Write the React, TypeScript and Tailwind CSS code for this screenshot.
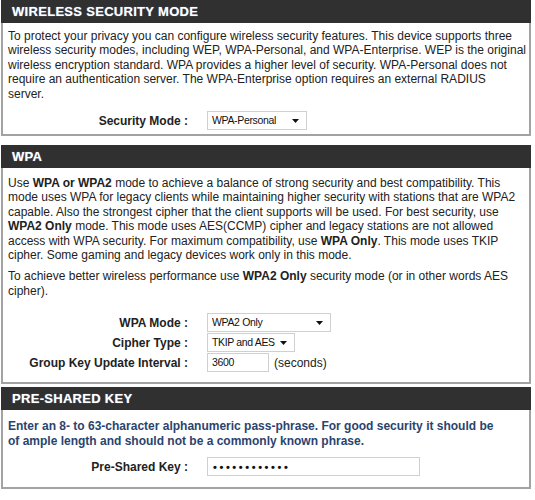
import React from 'react';

const font = { fontFamily: '"Liberation Sans", Arial, sans-serif' };

const Header = ({ title }: { title: string }) => (
  <div className="h-[23px] bg-[#303030] flex items-center pl-[11px]">
    <span className="text-white text-[13px] font-bold tracking-[0.3px] [text-shadow:0_0_1px_#8aa0c8]">
      {title}
    </span>
  </div>
);

const Caret = () => (
  <svg width="7" height="4" viewBox="0 0 7 4" className="shrink-0">
    <path d="M0 0h7L3.5 4z" fill="#111" />
  </svg>
);

const Select = ({ value, width }: { value: string; width: string }) => (
  <div className={`${width} h-[19px] border border-[#d0d0d0] bg-white flex items-center justify-between pl-[4px] pr-[7px]`}>
    <span className="text-[10.5px] tracking-[-0.35px] text-[#111] whitespace-nowrap">{value}</span>
    <Caret />
  </div>
);

const Row = ({ label, children }: { label: string; children: React.ReactNode }) => (
  <div className="flex items-center">
    <div className="w-[186px] text-right text-[12px] font-bold text-[#222] whitespace-nowrap">{label}</div>
    <div className="pl-[19px] flex items-center">{children}</div>
  </div>
);

export default function App() {
  return (
    <div className="w-[535px] h-[500px] bg-white pl-[1px] text-[#222]" style={font}>
      {/* wireless security mode */}
      <section className="w-[530px]">
        <Header title="WIRELESS SECURITY MODE" />
        <div className="border-2 border-t-0 border-[#a3a3a3] px-[5px] pt-[6px] pb-[4px]">
          <p className="text-[12px] leading-[14.4px] whitespace-nowrap">
            To protect your privacy you can configure wireless security features. This device supports three<br />
            wireless security modes, including WEP, WPA-Personal, and WPA-Enterprise. WEP is the original<br />
            wireless encryption standard. WPA provides a higher level of security. WPA-Personal does not<br />
            require an authentication server. The WPA-Enterprise option requires an external RADIUS<br />
            server.
          </p>
          <div className="mt-[10px] -ml-[6px]">
            <Row label="Security Mode :">
              <Select value="WPA-Personal" width="w-[100px]" />
            </Row>
          </div>
        </div>
      </section>

      {/* wpa */}
      <section className="w-[530px] mt-[9px]">
        <Header title="WPA" />
        <div className="border-2 border-t-0 border-[#a3a3a3] px-[5px] pt-[8px] pb-[10px]">
          <p className="text-[12px] leading-[14.4px] whitespace-nowrap">
            Use <b>WPA or WPA2</b> mode to achieve a balance of strong security and best compatibility. This<br />
            mode uses WPA for legacy clients while maintaining higher security with stations that are WPA2<br />
            capable. Also the strongest cipher that the client supports will be used. For best security, use<br />
            <b>WPA2 Only</b> mode. This mode uses AES(CCMP) cipher and legacy stations are not allowed<br />
            access with WPA security. For maximum compatibility, use <b>WPA Only</b>. This mode uses TKIP<br />
            cipher. Some gaming and legacy devices work only in this mode.
          </p>
          <p className="text-[12px] leading-[14.4px] whitespace-nowrap mt-[7px]">
            To achieve better wireless performance use <b>WPA2 Only</b> security mode (or in other words AES<br />
            cipher).
          </p>
          <div className="mt-[15px] -ml-[6px] flex flex-col gap-[1px]">
            <Row label="WPA Mode :">
              <Select value="WPA2 Only" width="w-[124px]" />
            </Row>
            <Row label="Cipher Type :">
              <Select value="TKIP and AES" width="w-[88px]" />
            </Row>
            <Row label="Group Key Update Interval :">
              <div className="w-[62px] h-[19px] border border-[#d0d0d0] bg-white flex items-center pl-[4px]">
                <span className="text-[10.5px] tracking-[-0.35px] text-[#111]">3600</span>
              </div>
              <span className="text-[12px] ml-[5px]">(seconds)</span>
            </Row>
          </div>
        </div>
      </section>

      {/* pre-shared key */}
      <section className="w-[530px] mt-[3px]">
        <Header title="PRE-SHARED KEY" />
        <div className="border-2 border-t-0 border-[#a3a3a3] px-[5px] pt-[9px] pb-[11px]">
          <p className="text-[12px] leading-[14.6px] font-bold text-[#2a446e] whitespace-nowrap">
            Enter an 8- to 63-character alphanumeric pass-phrase. For good security it should be<br />
            of ample length and should not be a commonly known phrase.
          </p>
          <div className="mt-[9px] -ml-[6px]">
            <Row label="Pre-Shared Key :">
              <div className="w-[213px] h-[19px] border border-[#d0d0d0] bg-white flex items-center pl-[5px]">
                <span className="text-[11px] font-bold tracking-[2.6px] text-[#111]">••••••••••••</span>
              </div>
            </Row>
          </div>
        </div>
      </section>
    </div>
  );
}
